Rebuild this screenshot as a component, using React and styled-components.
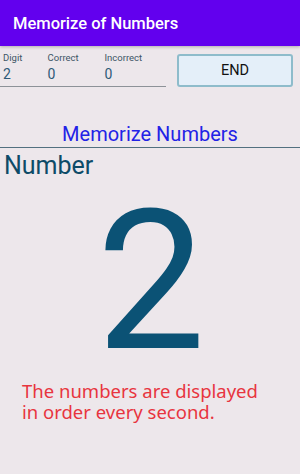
import React from "react";
import styled, { createGlobalStyle } from "styled-components";

const Global = createGlobalStyle`
  html, body { margin: 0; padding: 0; background: #ede7eb; }
  body { font-family: Roboto, "Noto Sans", sans-serif; }
`;

const Screen = styled.div`
  width: 300px;
  height: 474px;
  background: #ede7eb;
  display: flex;
  flex-direction: column;
  overflow: hidden;
`;

const AppBar = styled.header`
  height: 46px;
  background: #6200ee;
  display: flex;
  align-items: center;
  padding-left: 13px;
  color: #fff;
  font-weight: 500;
  font-size: 16.5px;
  box-shadow: 0 1px 3px rgba(0,0,0,0.25);
`;

const StatusRow = styled.div`
  display: flex;
  align-items: flex-start;
  padding-top: 6px;
  height: 42px;
`;

const Stats = styled.div`
  width: 166px;
  height: 34px;
  border-bottom: 1.5px solid #8d9298;
  display: flex;
`;

const Stat = styled.div`
  width: ${(p) => p.$w}px;
  padding-left: 3px;
  display: flex;
  flex-direction: column;
`;

const Label = styled.span`
  font-size: 9.5px;
  color: #3d5566;
  line-height: 12px;
`;

const Value = styled.span`
  font-size: 14px;
  color: #2f5a78;
  line-height: 18px;
  margin-top: 1px;
`;

const EndButton = styled.button`
  margin-left: 11px;
  margin-top: 2px;
  width: 116px;
  height: 33px;
  background: #e4eff9;
  border: 2px solid #8ebccb;
  border-radius: 3px;
  font-family: Roboto, sans-serif;
  font-size: 14.5px;
  font-weight: 400;
  color: #111;
  padding: 0;
`;

const SectionTitle = styled.div`
  margin-top: 28px;
  text-align: center;
  color: #2222e6;
  font-size: 20px;
  line-height: 24px;
  padding-bottom: 1px;
  border-bottom: 1px solid #52707f;
`;

const NumberLabel = styled.div`
  padding-left: 4px;
  font-size: 25px;
  color: #0e4b68;
  line-height: 30px;
  margin-top: 3px;
`;

const BigDigit = styled.div`
  text-align: center;
  font-size: 194px;
  line-height: 190px;
  color: #0b5275;
  margin-top: 6px;
  margin-left: 2px;
`;

const Notice = styled.p`
  margin: 0;
  margin-top: 3px;
  padding-left: 22px;
  font-family: "Noto Sans", sans-serif;
  font-size: 18.5px;
  line-height: 21px;
  color: #e8353f;
`;

export default function App() {
  return (
    <Screen>
      <Global />
      <AppBar>Memorize of Numbers</AppBar>
      <StatusRow>
        <Stats>
          <Stat $w={44}>
            <Label>Digit</Label>
            <Value>2</Value>
          </Stat>
          <Stat $w={57}>
            <Label>Correct</Label>
            <Value>0</Value>
          </Stat>
          <Stat $w={65}>
            <Label>Incorrect</Label>
            <Value>0</Value>
          </Stat>
        </Stats>
        <EndButton>END</EndButton>
      </StatusRow>
      <SectionTitle>Memorize Numbers</SectionTitle>
      <NumberLabel>Number</NumberLabel>
      <BigDigit>2</BigDigit>
      <Notice>
        The numbers are displayed
        <br />
        in order every second.
      </Notice>
    </Screen>
  );
}
